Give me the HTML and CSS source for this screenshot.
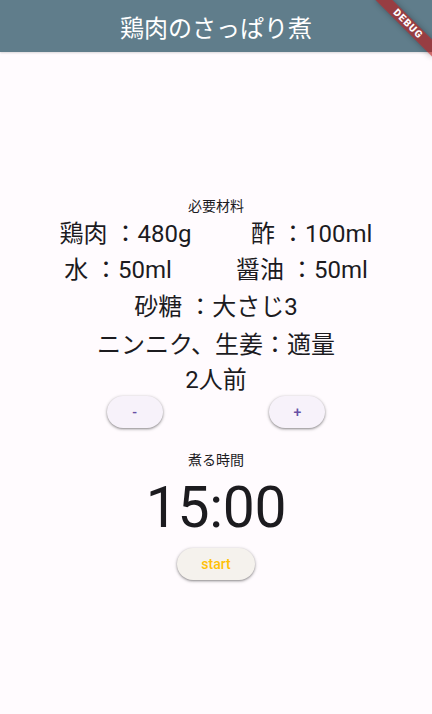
FILE: index.html
```html
<!DOCTYPE html>
<html lang="ja">
<head>
    <meta charset="UTF-8">
    <meta name="viewport" content="width=device-width, initial-scale=1.0">
    <title>鶏肉のさっぱり煮</title>
    <link rel="stylesheet" href="styles.css">
</head>
<body>

    <div class="app">
        <header class="app-bar">
            <h1>鶏肉のさっぱり煮</h1>
        </header>

        <main class="recipe">
            <!-- Ingredients -->
            <p class="label">必要材料</p>
            <div class="pair">
                <span>鶏肉 ：480g</span>
                <span>酢 ：100ml</span>
            </div>
            <div class="pair">
                <span>水 ：50ml</span>
                <span>醤油 ：50ml</span>
            </div>
            <p class="item">砂糖 ：大さじ3</p>
            <p class="item">ニンニク、生姜：適量</p>
            <p class="item servings">2人前</p>

            <div class="counter">
                <button class="btn">-</button>
                <button class="btn">+</button>
            </div>

            <!-- Timer -->
            <p class="label timer-label">煮る時間</p>
            <p class="timer">15:00</p>
            <button class="btn btn-start">start</button>
        </main>

        <div class="debug-banner">DEBUG</div>
    </div>

</body>
</html>
```

FILE: styles.css
```css
/* Base */
body {
    margin: 0;
    padding: 0;
    background-color: #fffbfe;
    color: #1c1b1f;
    font-family: Roboto, "Noto Sans CJK JP", sans-serif;
}

p {
    margin: 0;
}

.app {
    position: relative;
    width: 432px;
    height: 714px;
    overflow: hidden;
}

/* App bar */
.app-bar {
    height: 52px;
    display: flex;
    align-items: center;
    justify-content: center;
    background-color: #607d8b;
    box-shadow: 0 1px 2px rgba(0, 0, 0, 0.15);
}

.app-bar h1 {
    margin: 0;
    color: #fff;
    font-size: 24px;
    font-weight: 400;
}

/* Recipe body */
.recipe {
    display: flex;
    flex-direction: column;
    align-items: center;
    padding-top: 144px;
}

.label {
    height: 20px;
    line-height: 20px;
    font-size: 14px;
}

.pair {
    width: 100%;
    display: flex;
    justify-content: space-evenly;
    font-size: 24px;
    line-height: 36px;
}

.item {
    font-size: 24px;
    line-height: 38px;
}

.item:first-of-type {
    margin-top: 1px;
}

.servings {
    line-height: 32px;
}

/* Buttons */
.counter {
    width: 100%;
    display: flex;
    justify-content: space-evenly;
}

.btn {
    width: 56px;
    height: 32px;
    padding: 0;
    border: none;
    border-radius: 16px;
    background-color: #f7f2fa;
    color: #6750a4;
    font-family: Roboto, sans-serif;
    font-size: 14px;
    font-weight: 500;
    box-shadow: 0 1px 2px rgba(0, 0, 0, 0.3), 0 1px 3px 1px rgba(0, 0, 0, 0.15);
    cursor: pointer;
}

.btn-start {
    width: 78px;
    margin-top: 8px;
    background-color: #f5f2ed;
    color: #ffc107;
}

/* Timer */
.timer-label {
    margin-top: 22px;
}

.timer {
    margin-top: 6px;
    font-size: 57px;
    line-height: 64px;
    letter-spacing: -0.25px;
}

/* Flutter debug ribbon */
.debug-banner {
    position: absolute;
    top: 18px;
    right: -16px;
    width: 80px;
    height: 12px;
    line-height: 12px;
    transform: rotate(45deg);
    background-color: rgba(183, 24, 24, 0.63);
    box-shadow: 0 0 6px rgba(0, 0, 0, 0.3);
    color: #fff;
    font-family: Roboto, sans-serif;
    font-size: 10px;
    font-weight: 900;
    letter-spacing: 1px;
    text-align: center;
}
```
